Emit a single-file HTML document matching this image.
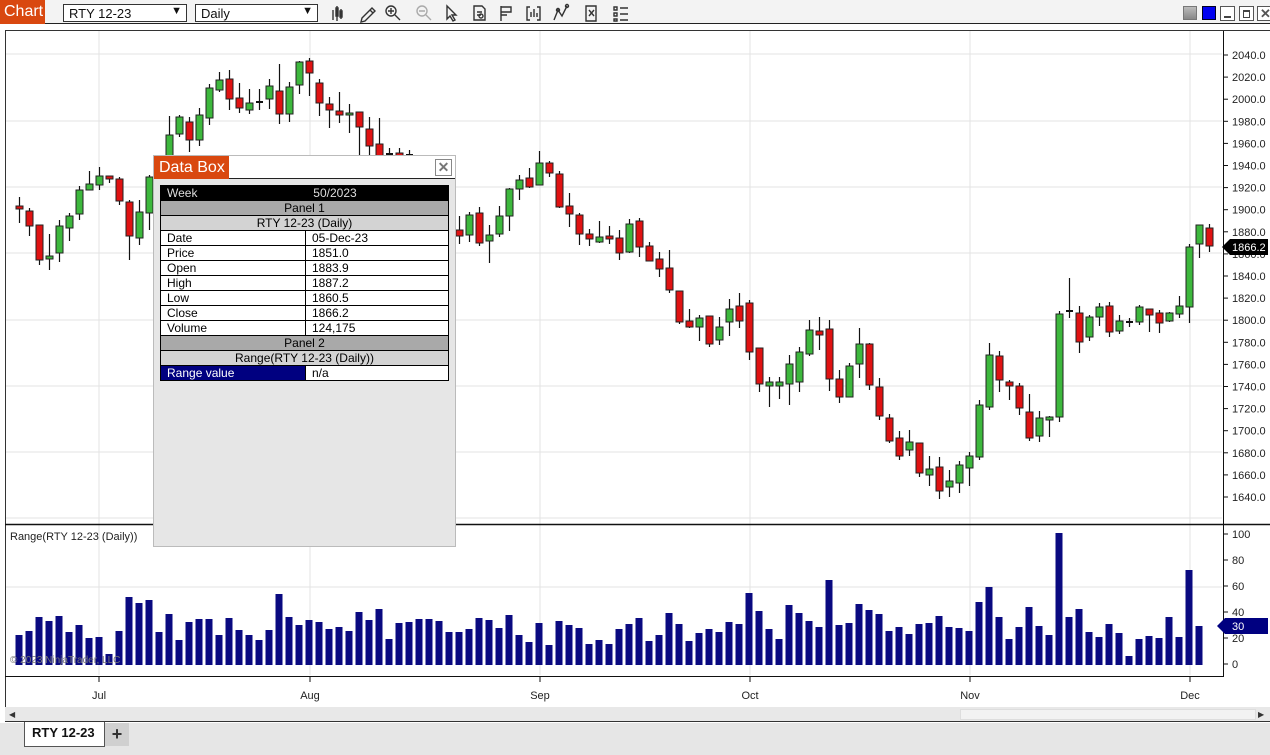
<!DOCTYPE html>
<html><head><meta charset="utf-8"><style>
*{margin:0;padding:0;box-sizing:border-box}
body{width:1270px;height:755px;overflow:hidden;background:#fff;font-family:"Liberation Sans",sans-serif;position:relative}
.abs{position:absolute}
.sel{position:absolute;top:4px;height:18px;border:1px solid #333;background:#fff;font-size:13px;padding:1px 5px;color:#111}
.sel span{position:absolute;right:4px;top:0;font-size:11px}
table{border-collapse:collapse;font-size:12px;width:289px}
td{border:1px solid #000;height:15px;padding:0 6px;line-height:13px;white-space:nowrap}
</style></head><body>
<!-- toolbar -->
<div class="abs" style="left:0;top:0;width:1270px;height:24px;background:#f3f3f3;border-bottom:1px solid #222"></div>
<div class="abs" style="left:0;top:0;width:45px;height:24px;background:#d9480f;color:#fff;font-size:16px;line-height:24px;padding-left:4px">Chart</div>
<div class="sel" style="left:63px;width:124px">RTY 12-23<span>&#9660;</span></div>
<div class="sel" style="left:195px;width:123px">Daily<span>&#9660;</span></div>
<svg class="abs" style="left:328px;top:2px" width="300" height="22" fill="none" stroke="#333" stroke-width="1.4">
<path d="M5 8v10M9 4v15M13 7v10M8 6h2v8h-2zM12 9h2v6h-2z"/>
<path d="M34 16l10-10 3 3-10 10-4 1z M42 8l3 3"/>
<circle cx="63" cy="9" r="5"/><path d="M67 13l5 5M60 9h6M63 6v6"/>
<g stroke="#aaa"><circle cx="94" cy="9" r="5"/><path d="M98 13l5 5M91 9h6"/></g>
<path d="M119 4l0 13 3-3 3 5 2-1-3-5 4 0z"/>
<path d="M146 4h8l3 3v11h-11z M149 10h5M149 13h4"/><circle cx="153" cy="14" r="2"/>
<path d="M173 4v15M173 5h10v5h-10M173 13h6"/>
<path d="M202 5h-3v13h3M209 5h3v13h-3M203 15v-5M206 15v-8M209 15v-4"/>
<path d="M226 18l4-10 4 6 5-10"/><circle cx="230" cy="8" r="1.5"/><circle cx="239" cy="4" r="1.5"/>
<path d="M258 4h10v15h-10zM261 8l5 6M266 8l-5 6"/>
<path d="M286 5h3v3h-3zM286 11h3v3h-3zM286 17h3v2h-3zM292 6h8M292 12h8M292 18h8"/>
</svg>
<div class="abs" style="left:1183px;top:6px;width:14px;height:14px;background:linear-gradient(#bbb,#888);border:1px solid #777"></div>
<div class="abs" style="left:1202px;top:6px;width:14px;height:14px;background:#0000f0;border:1px solid #002"></div>
<div class="abs" style="left:1220px;top:6px;width:15px;height:15px;border:1px solid #555;background:#fff"><div style="margin:9px 3px 0;height:2px;background:#444"></div></div>
<div class="abs" style="left:1239px;top:6px;width:15px;height:15px;border:1px solid #555;background:#fff"><div style="margin:3px;height:8px;border:1px solid #444;border-top-width:2px"></div></div>
<div class="abs" style="left:1257px;top:6px;width:15px;height:15px;border:1px solid #555;background:#fff;color:#555;font-size:13px;line-height:13px;padding-left:2px;font-weight:bold">✕</div>

<svg id="ch" class="abs" style="left:0;top:0" width="1270" height="755"></svg>

<div class="abs" style="left:10px;top:531px;font-size:11px;color:#222">Range(RTY 12-23 (Daily))</div>
<div class="abs" style="left:10px;top:655px;font-size:10px;color:#777">© 2023 NinjaTrader, LLC</div>

<!-- scroll & tabs -->
<div class="abs" style="left:5px;top:707px;width:1265px;height:15px;background:#e8e8e8;border-bottom:1px solid #333"></div>
<div class="abs" style="left:960px;top:709px;width:296px;height:11px;background:#f2f2f2;border:1px solid #ddd"></div>
<div class="abs" style="left:9px;top:710px;font-size:8px;color:#333">&#9664;</div>
<div class="abs" style="left:1258px;top:710px;font-size:8px;color:#333">&#9654;</div>
<div class="abs" style="left:0;top:723px;width:1270px;height:32px;background:#e6e6e6"></div>
<div class="abs" style="left:24px;top:722px;width:81px;height:25px;background:#fff;border:1px solid #555;border-top:none;font-weight:bold;font-size:13px;line-height:22px;padding-left:7px;color:#111">RTY 12-23</div>
<div class="abs" style="left:105px;top:723px;width:24px;height:23px;background:#d0d0d0;font-size:18px;line-height:22px;text-align:center;color:#333;font-weight:bold">+</div>

<!-- data box -->
<div class="abs" style="left:153px;top:155px;width:303px;height:392px;background:#e6e6e6;border:1px solid #bbb">
 <div style="height:23px;background:#fff;border-bottom:1px solid #222;position:relative">
  <div style="position:absolute;left:0;top:0;width:75px;height:23px;background:#d9480f;color:#fff;font-size:16px;line-height:23px;padding-left:5px">Data Box</div>
  <div style="position:absolute;right:3px;top:3px;width:17px;height:17px;border:1px solid #888;color:#777;font-size:14px;line-height:15px;text-align:center;font-weight:bold">✕</div>
 </div>
 <table style="margin:6px 0 0 6px">
 <tr style="background:#000;color:#ddd"><td style="width:145px">Week</td><td style="text-align:center;padding-right:90px">50/2023</td></tr>
 <tr style="background:#a9a9a9"><td colspan="2" style="text-align:center">Panel 1</td></tr>
 <tr style="background:#d3d3d3"><td colspan="2" style="text-align:center">RTY 12-23 (Daily)</td></tr>
 <tr style="background:#fff"><td>Date</td><td>05-Dec-23</td></tr>
 <tr style="background:#fff"><td>Price</td><td>1851.0</td></tr>
 <tr style="background:#fff"><td>Open</td><td>1883.9</td></tr>
 <tr style="background:#fff"><td>High</td><td>1887.2</td></tr>
 <tr style="background:#fff"><td>Low</td><td>1860.5</td></tr>
 <tr style="background:#fff"><td>Close</td><td>1866.2</td></tr>
 <tr style="background:#fff"><td>Volume</td><td>124,175</td></tr>
 <tr style="background:#a9a9a9"><td colspan="2" style="text-align:center">Panel 2</td></tr>
 <tr style="background:#d3d3d3"><td colspan="2" style="text-align:center">Range(RTY 12-23 (Daily))</td></tr>
 <tr style="background:#fff"><td style="background:#000080;color:#fff">Range value</td><td>n/a</td></tr>
 </table>
</div>

<script>
var C=[
[0,'r',206,209,197,223],[1,'r',211,226,208,236],[2,'r',225,260,225,265],[3,'g',256,259,234,270],[4,'g',226,253,220,262],[5,'g',216,228,213,241],[6,'g',190,214,186,220],[7,'g',184,190,171,190],[8,'g',176,185,167,190],[9,'r',176,179,176,183],[10,'r',179,201,177,205],[11,'r',202,236,200,260],[12,'g',212,238,200,245],[13,'g',177,213,175,230],[15,'g',135,160,116,170],[16,'g',117,134,115,137],[17,'r',122,140,117,152],[18,'g',115,140,108,146],[19,'g',88,118,84,125],[20,'g',80,90,72,92],[21,'r',79,99,70,110],[22,'r',98,108,83,113],[23,'g',103,110,89,114],[24,'k',102,102,89,110],[25,'g',86,99,79,109],[26,'r',91,114,64,124],[27,'g',87,114,82,122],[28,'g',62,85,61,94],[29,'r',61,73,58,96],[30,'r',83,103,79,116],[31,'r',104,110,97,128],[32,'r',111,115,92,123],[33,'g',113,115,104,133],[34,'r',112,127,112,155],[35,'r',129,146,117,160],[36,'r',144,160,118,165],[37,'k',154,154,148,160],[38,'r',153,157,148,160],[39,'k',155,155,150,160],
[44,'r',230,236,216,244],[45,'g',215,235,212,242],[46,'r',213,243,207,246],[47,'g',235,241,225,263],[48,'g',216,234,206,237],[49,'g',189,216,188,231],[50,'g',180,189,175,200],[51,'r',178,187,168,188],[52,'g',163,185,151,185],[53,'r',163,173,161,177],[54,'r',174,207,171,208],[55,'r',206,214,193,227],[56,'r',215,234,213,245],[57,'r',234,239,229,246],[58,'g',237,242,221,243],[59,'r',236,239,226,244],[60,'r',238,253,230,260],[61,'g',224,252,219,253],[62,'r',221,247,218,257],[63,'r',246,261,242,261],[64,'r',259,269,252,277],[65,'r',268,290,250,293],[66,'r',291,322,291,324],[67,'r',321,327,309,328],[68,'g',318,327,315,341],[69,'r',316,344,316,347],[70,'g',327,340,317,345],[71,'g',309,322,299,336],[72,'r',306,321,293,328],[73,'r',303,352,300,360],[74,'r',348,384,348,392],[75,'g',382,386,377,407],[76,'g',382,386,377,399],[77,'g',364,384,355,405],[78,'g',352,382,347,392],[79,'g',330,354,320,356],[80,'r',331,335,317,350],[81,'r',329,379,320,391],[82,'r',379,397,370,403],[83,'g',366,397,363,397],[84,'g',344,364,328,378],[85,'r',344,385,343,390],[86,'r',387,416,378,420],[87,'r',418,441,414,443],[88,'r',438,456,431,460],[89,'g',442,450,430,456],[90,'r',443,473,443,477],[91,'g',469,475,456,486],[92,'r',467,491,457,499],[93,'g',481,487,470,497],[94,'g',465,483,461,493],[95,'g',456,468,452,486],[96,'g',405,457,400,460],[97,'g',355,407,343,410],[98,'r',356,380,351,392],[99,'r',382,386,380,400],[100,'r',386,408,383,415],[101,'r',412,438,394,441],[102,'g',418,436,411,442],[103,'g',417,420,416,437],[104,'g',314,417,311,422],[105,'k',311,311,278,318],[106,'r',313,342,306,353],[107,'g',317,337,315,341],[108,'g',307,317,303,326],[109,'r',306,332,302,337],[110,'g',321,331,315,334],[111,'k',322,322,318,327],[112,'g',307,322,305,325],[113,'r',309,315,309,332],[114,'r',313,323,310,333],[115,'g',313,321,312,322],[116,'g',306,314,296,318],[117,'g',247,307,244,323],[118,'g',225,244,225,258],[119,'r',228,246,224,252]];
var V=[635,631,617,621,616,632,625,638,637,654,631,597,603,600,632,614,640,622,619,619,635,618,630,635,640,630,594,617,625,620,622,629,627,631,612,620,609,639,623,622,619,619,621,632,632,629,618,620,628,615,635,642,623,645,621,625,628,644,640,644,629,624,618,641,635,613,624,641,633,629,632,622,624,593,611,629,639,605,613,621,627,580,625,623,604,610,614,631,627,634,624,623,616,627,628,631,602,587,617,639,627,607,626,635,533,617,609,632,637,624,633,656,639,636,638,617,637,570,626];
var s='';
// frame
s+='<rect x="5" y="30" width="1265" height="677" fill="#fff" stroke="none"/>';
[54,121,187,253,320,386,452,518].forEach(y=>s+='<line x1="6" x2="1222" y1="'+y+'" y2="'+y+'" stroke="#e3e3e3"/>');
s+='<line x1="6" x2="1222" y1="587" y2="587" stroke="#e3e3e3"/>';
[99,310,540,750,970,1190].forEach(x=>{s+='<line x1="'+x+'" x2="'+x+'" y1="31" y2="675" stroke="#e3e3e3"/>';});
s+='<line x1="5.5" x2="5.5" y1="30" y2="707" stroke="#333"/>';
s+='<line x1="5" x2="1270" y1="30.5" y2="30.5" stroke="#333"/>';
s+='<line x1="5" x2="1270" y1="524.5" y2="524.5" stroke="#111" stroke-width="1.5"/>';
s+='<line x1="5" x2="1223" y1="676.5" y2="676.5" stroke="#111"/>';
s+='<line x1="1223.5" x2="1223.5" y1="31" y2="677" stroke="#111"/>';
// price axis
for(var i=0;i<=20;i++){var p=2040-20*i,y=55+i*22.1;s+='<line x1="1223" x2="1228" y1="'+y+'" y2="'+y+'" stroke="#111"/><text x="1232" y="'+(y+4)+'" font-size="11" fill="#222">'+p.toFixed(1)+'</text>';}
[[100,534],[80,560],[60,586],[40,612],[20,638],[0,664]].forEach(a=>{s+='<line x1="1223" x2="1228" y1="'+a[1]+'" y2="'+a[1]+'" stroke="#111"/><text x="1232" y="'+(a[1]+4)+'" font-size="11" fill="#222">'+a[0]+'</text>';});
// time axis
[['Jul',99],['Aug',310],['Sep',540],['Oct',750],['Nov',970],['Dec',1190]].forEach(a=>{s+='<line x1="'+a[1]+'" x2="'+a[1]+'" y1="677" y2="682" stroke="#111"/><text x="'+a[1]+'" y="699" font-size="11" fill="#222" text-anchor="middle">'+a[0]+'</text>';});
// volume
V.forEach((t,i)=>{var x=19+10*i;s+='<rect x="'+(x-3.5)+'" y="'+t+'" width="7" height="'+(665-t)+'" fill="#0a0a80"/>';});
// candles
C.forEach(c=>{var x=19+10*c[0];s+='<line x1="'+(x+.5)+'" x2="'+(x+.5)+'" y1="'+c[4]+'" y2="'+c[5]+'" stroke="#111" stroke-width="1.2"/>';
 if(c[1]=='k'){s+='<line x1="'+(x-3)+'" x2="'+(x+4)+'" y1="'+c[2]+'" y2="'+c[2]+'" stroke="#111" stroke-width="2"/>';}
 else{s+='<rect x="'+(x-3)+'" y="'+c[2]+'" width="7" height="'+Math.max(2,c[3]-c[2])+'" fill="'+(c[1]=='g'?'#3db83d':'#e01212')+'" stroke="#222" stroke-width="1"/>';}});
// tags
s+='<polygon points="1222,247 1230,239 1268,239 1268,255 1230,255" fill="#000"/><text x="1232" y="251" font-size="11" fill="#fff">1866.2</text>';
s+='<polygon points="1217,626 1225,618 1268,618 1268,634 1225,634" fill="#000080"/><text x="1232" y="630" font-size="11" fill="#fff">30</text>';
document.getElementById('ch').innerHTML=s;
</script>
</body></html>
